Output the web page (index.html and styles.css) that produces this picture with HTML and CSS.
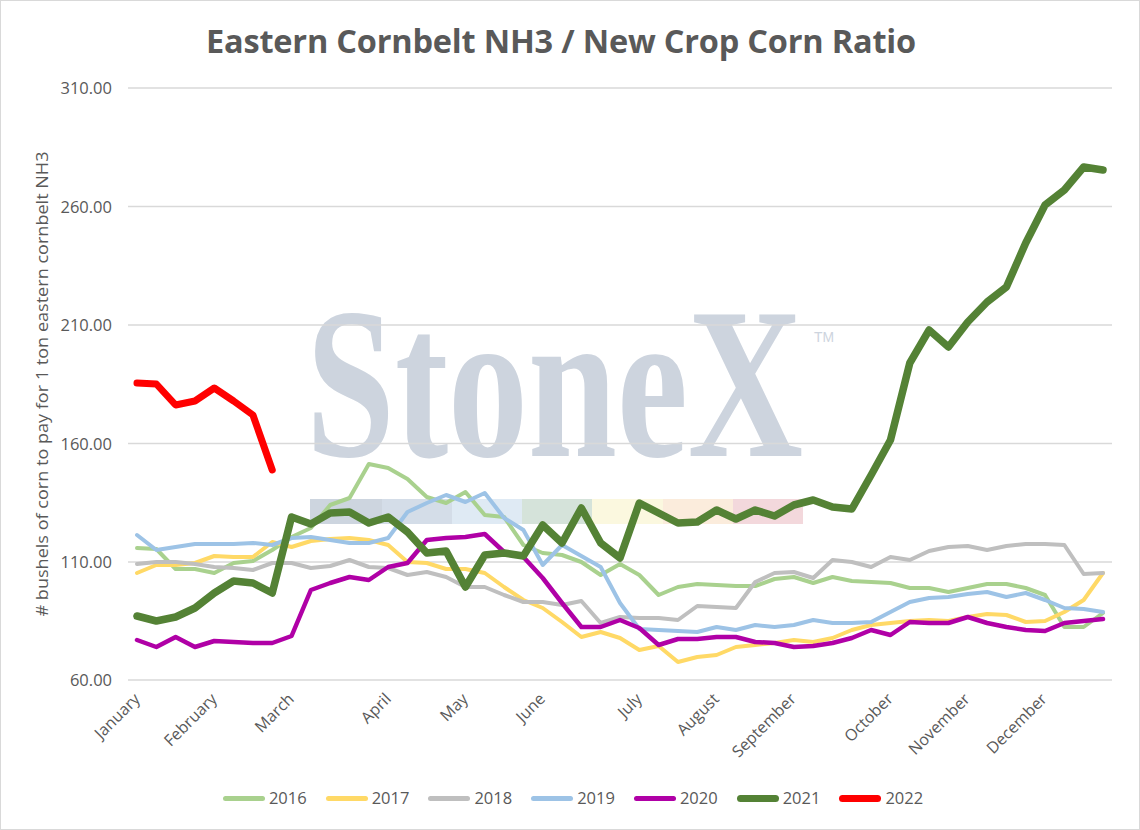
FILE: index.html
```html
<!DOCTYPE html>
<html>
<head>
<meta charset="utf-8">
<title>Eastern Cornbelt NH3 / New Crop Corn Ratio</title>
<link rel="stylesheet" href="styles.css">
</head>
<body>
<div class="chart">
  <div class="title">Eastern Cornbelt NH3 / New Crop Corn Ratio</div>
  <svg class="plot" width="1138" height="704" viewBox="1 76 1138 704" xmlns="http://www.w3.org/2000/svg">
    <!-- watermark -->
    <g class="wm">
      <text class="wm-text" transform="translate(306 456) scale(0.74 1)">StoneX</text>
      <text class="wm-tm" x="814" y="342" textLength="20" lengthAdjust="spacingAndGlyphs">TM</text>
      <rect class="b1" x="310" y="499" width="72" height="25"/>
      <rect class="b2" x="382" y="499" width="70" height="25"/>
      <rect class="b3" x="452" y="499" width="70" height="25"/>
      <rect class="b4" x="522" y="499" width="70" height="25"/>
      <rect class="b5" x="592" y="499" width="71" height="25"/>
      <rect class="b6" x="663" y="499" width="70" height="25"/>
      <rect class="b7" x="733" y="499" width="70" height="25"/>
    </g>
    <!-- gridlines -->
    <g class="grid">
      <line x1="128" y1="88" x2="1112" y2="88"/>
      <line x1="128" y1="206.5" x2="1112" y2="206.5"/>
      <line x1="128" y1="325" x2="1112" y2="325"/>
      <line x1="128" y1="443.5" x2="1112" y2="443.5"/>
      <line x1="128" y1="562" x2="1112" y2="562"/>
      <line x1="128" y1="680" x2="1112" y2="680"/>
    </g>
    <!-- y tick labels -->
    <g class="ylab">
      <text x="112" y="94">310.00</text>
      <text x="112" y="212.5">260.00</text>
      <text x="112" y="331">210.00</text>
      <text x="112" y="449.5">160.00</text>
      <text x="112" y="568">110.00</text>
      <text x="112" y="686">60.00</text>
    </g>
    <!-- y axis title -->
    <text class="ytitle" x="48" y="384" transform="rotate(-90 48 384)" textLength="465" lengthAdjust="spacingAndGlyphs"># bushels of corn to pay for 1 ton eastern cornbelt NH3</text>
    <!-- month labels -->
    <g class="xlab">
      <text x="141" y="700" transform="rotate(-45 141 700)">January</text>
      <text x="218" y="700" transform="rotate(-45 218 700)">February</text>
      <text x="295" y="700" transform="rotate(-45 295 700)">March</text>
      <text x="392" y="700" transform="rotate(-45 392 700)">April</text>
      <text x="469" y="700" transform="rotate(-45 469 700)">May</text>
      <text x="546" y="700" transform="rotate(-45 546 700)">June</text>
      <text x="643" y="700" transform="rotate(-45 643 700)">July</text>
      <text x="720" y="700" transform="rotate(-45 720 700)">August</text>
      <text x="797" y="700" transform="rotate(-45 797 700)">September</text>
      <text x="894" y="700" transform="rotate(-45 894 700)">October</text>
      <text x="971" y="700" transform="rotate(-45 971 700)">November</text>
      <text x="1048" y="700" transform="rotate(-45 1048 700)">December</text>
    </g>
    <!-- series -->
    <g transform="translate(137 0) scale(19.32 1)">
      <polyline class="ln s16" vector-effect="non-scaling-stroke" points="0,548 1,549 2,569 3,569 4,573 5,563 6,561 7,550 8,537 9,528 10,505 11,498 12,464 13,468 14,479 15,497 16,503 17,492 18,515 19,517 20,545 21,553 22,555 23,562 24,575 25,564 26,575 27,595 28,587 29,584 30,585 31,586 32,586 33,579 34,577 35,583 36,577 37,581 38,582 39,583 40,588 41,588 42,592 43,588 44,584 45,584 46,588 47,595 48,627 49,627 50,613"/>
      <polyline class="ln s17" vector-effect="non-scaling-stroke" points="0,573 1,565 2,565 3,563 4,556 5,557 6,557 7,542 8,547 9,541 10,539 11,538 12,540 13,545 14,562 15,563 16,569 17,569 18,573 19,587 20,600 21,608 22,622 23,637 24,632 25,638 26,650 27,646 28,662 29,657 30,655 31,647 32,645 33,643 34,640 35,642 36,638 37,630 38,625 39,623 40,621 41,620 42,621 43,617 44,614 45,615 46,622 47,621 48,612 49,600 50,573"/>
      <polyline class="ln s18" vector-effect="non-scaling-stroke" points="0,564 1,562 2,562 3,564 4,567 5,568 6,570 7,563 8,563 9,568 10,566 11,560 12,567 13,568 14,575 15,572 16,577 17,587 18,587 19,595 20,602 21,602 22,605 23,601 24,623 25,617 26,618 27,618 28,620 29,606 30,607 31,608 32,582 33,573 34,572 35,578 36,560 37,562 38,567 39,557 40,560 41,551 42,547 43,546 44,550 45,546 46,544 47,544 48,545 49,574 50,573"/>
      <polyline class="ln s19" vector-effect="non-scaling-stroke" points="0,535 1,550 2,547 3,544 4,544 5,544 6,543 7,545 8,538 9,537 10,540 11,543 12,543 13,538 14,512 15,503 16,495 17,502 18,493 19,518 20,530 21,565 22,545 23,556 24,567 25,603 26,629 27,630 28,631 29,632 30,627 31,630 32,625 33,627 34,625 35,620 36,623 37,623 38,622 39,612 40,602 41,598 42,597 43,594 44,592 45,597 46,593 47,600 48,608 49,609 50,612"/>
      <polyline class="ln s20" vector-effect="non-scaling-stroke" points="0,640 1,647 2,637 3,647 4,641 5,642 6,643 7,643 8,636 9,590 10,583 11,577 12,580 13,567 14,563 15,540 16,538 17,537 18,534 19,552 20,557 21,578 22,603 23,627 24,627 25,620 26,628 27,645 28,639 29,639 30,637 31,637 32,642 33,643 34,647 35,646 36,643 37,638 38,630 39,635 40,622 41,623 42,623 43,617 44,623 45,627 46,630 47,631 48,623 49,621 50,619"/>
      <polyline class="ln s21" vector-effect="non-scaling-stroke" points="0,616 1,621 2,617 3,608 4,593 5,581 6,583 7,593 8,517 9,524 10,513 11,512 12,523 13,517 14,532 15,553 16,551 17,587 18,555 19,553 20,556 21,525 22,543 23,508 24,543 25,558 26,503 27,513 28,523 29,522 30,510 31,519 32,510 33,516 34,505 35,500 36,507 37,509 38,475 39,440 40,363 41,330 42,347 43,322 44,302 45,287 46,243 47,205 48,190 49,167 50,170"/>
      <polyline class="ln s22" vector-effect="non-scaling-stroke" points="0,383 1,384 2,405 3,401 4,388 5,401 6,415 7,470"/>
    </g>
  </svg>
  <div class="legend">
    <div class="item"><span class="key k16"></span><span class="lbl">2016</span></div>
    <div class="item"><span class="key k17"></span><span class="lbl">2017</span></div>
    <div class="item"><span class="key k18"></span><span class="lbl">2018</span></div>
    <div class="item"><span class="key k19"></span><span class="lbl">2019</span></div>
    <div class="item"><span class="key k20"></span><span class="lbl">2020</span></div>
    <div class="item"><span class="key k21 thick"></span><span class="lbl">2021</span></div>
    <div class="item"><span class="key k22 thick"></span><span class="lbl">2022</span></div>
  </div>
</div>
</body>
</html>
```

FILE: styles.css
```css
html, body {
  margin: 0;
  padding: 0;
  background: #ffffff;
}

.chart {
  width: 1140px;
  height: 830px;
  box-sizing: border-box;
  border: 1px solid #d9d9d9;
  display: flex;
  flex-direction: column;
  font-family: "Open Sans", "Liberation Sans", sans-serif;
  color: #595959;
  overflow: hidden;
}

.title {
  height: 75px;
  box-sizing: border-box;
  padding-top: 18px;
  padding-right: 18px;
  text-align: center;
  font-size: 32.5px;
  line-height: 44px;
  font-weight: 700;
  color: #595959;
  letter-spacing: -0.2px;
}

.plot {
  display: block;
  flex: none;
}

.wm-text {
  font-family: "Liberation Serif", "Times New Roman", serif;
  font-size: 216px;
  font-weight: 700;
  fill: #cdd4de;
}

.wm-tm {
  font-family: "Liberation Sans", sans-serif;
  font-size: 15px;
  fill: #cdd4de;
}

.b1 { fill: #cdd5df; }
.b2 { fill: #d4dde8; }
.b3 { fill: #dfeaf4; }
.b4 { fill: #d5e3da; }
.b5 { fill: #fbf8df; }
.b6 { fill: #fbecdc; }
.b7 { fill: #f3d8dc; }

.grid line {
  stroke: #d9d9d9;
  stroke-width: 1.5;
}

.ylab text {
  font-family: "Open Sans", "Liberation Sans", sans-serif;
  font-size: 16.5px;
  fill: #595959;
  text-anchor: end;
}

.ytitle {
  font-family: "Open Sans", "Liberation Sans", sans-serif;
  font-size: 16px;
  fill: #595959;
  text-anchor: middle;
}

.xlab text {
  font-family: "Open Sans", "Liberation Sans", sans-serif;
  font-size: 16px;
  fill: #595959;
  text-anchor: end;
}

.ln {
  fill: none;
  stroke-linejoin: round;
  stroke-linecap: round;
}

.s16 { stroke: #a9d18e; stroke-width: 4; }
.s17 { stroke: #ffd966; stroke-width: 4; }
.s18 { stroke: #bfbfbf; stroke-width: 4; }
.s19 { stroke: #9dc3e6; stroke-width: 4; }
.s20 { stroke: #b000a6; stroke-width: 4.5; }
.s21 { stroke: #548235; stroke-width: 7.5; }
.s22 { stroke: #ff0000; stroke-width: 7; }

.legend {
  flex: 1;
  display: flex;
  justify-content: center;
  align-items: center;
  gap: 19px;
  padding-bottom: 13px;
  padding-left: 6px;
}

.item {
  display: flex;
  align-items: center;
  gap: 4px;
}

.key {
  display: block;
  width: 42px;
  height: 5px;
  border-radius: 3px;
}

.key.thick {
  height: 7px;
  border-radius: 4px;
}

.k16 { background: #a9d18e; }
.k17 { background: #ffd966; }
.k18 { background: #bfbfbf; }
.k19 { background: #9dc3e6; }
.k20 { background: #b000a6; }
.k21 { background: #548235; }
.k22 { background: #ff0000; }

.lbl {
  font-size: 16.5px;
  line-height: 22px;
  color: #595959;
}
```
